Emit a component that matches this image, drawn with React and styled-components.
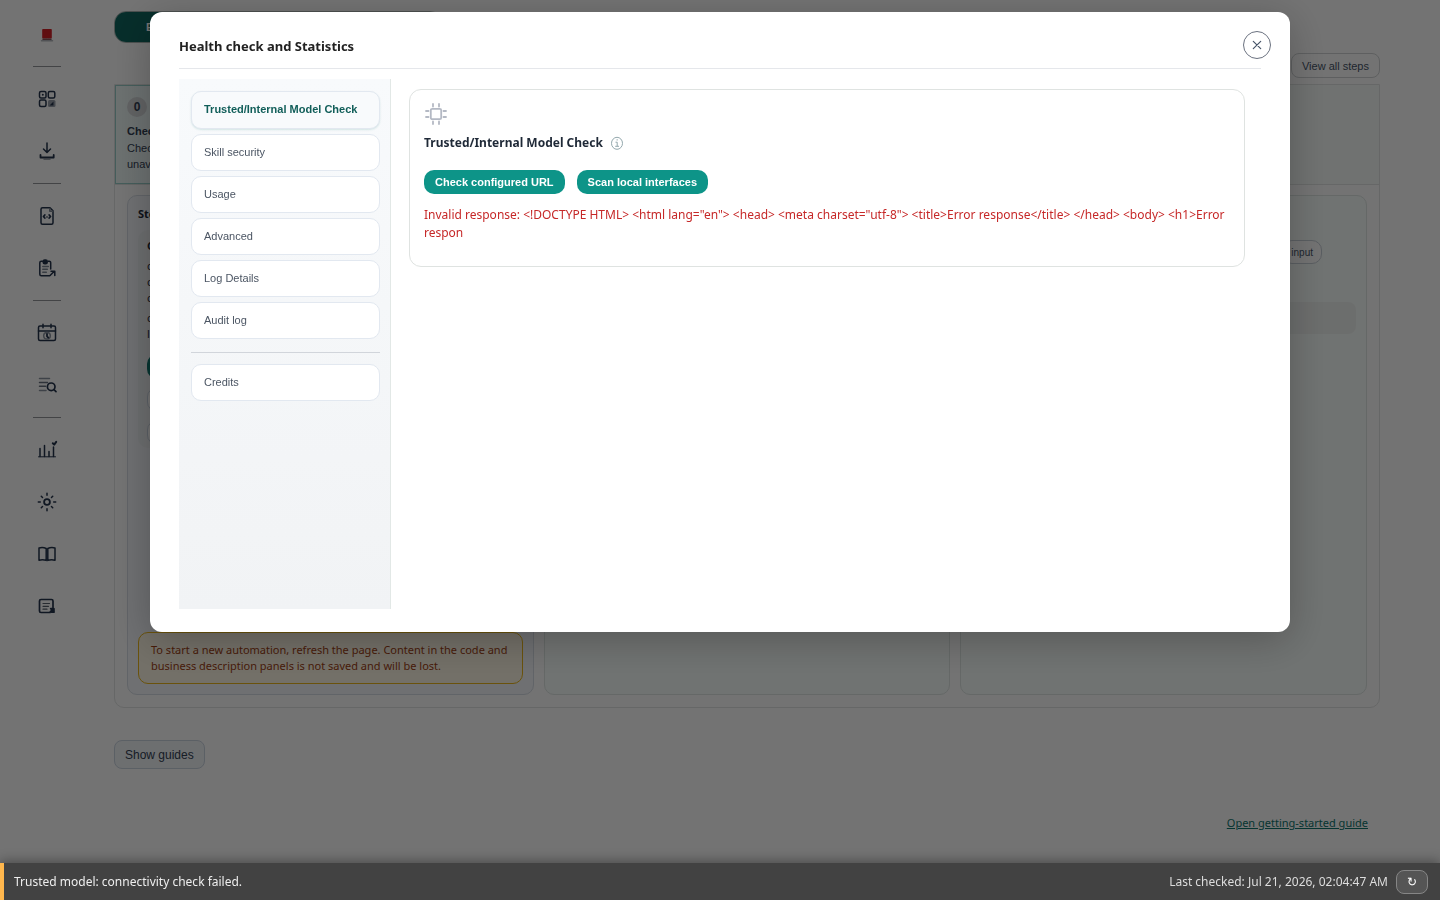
import React from 'react'
import styled, { createGlobalStyle, css } from 'styled-components'

const toolGroups = [
  ['home'],
  ['apps', 'download'],
  ['code', 'clipboard'],
  ['schedule', 'search'],
  ['stats', 'settings', 'guide', 'notes']
]

const sections = [
  'Trusted/Internal Model Check',
  'Skill security',
  'Usage',
  'Advanced',
  'Log Details',
  'Audit log'
]

const icons = {
  home: (
    <>
      <rect x='7.2' y='5' width='9.6' height='9.6' rx='.8' fill='#d61f26' stroke='none' />
      <path d='M8 15.3h8' stroke='#8a5a5f' strokeDasharray='1.5 1' />
      <path d='M6.5 16.8h11' stroke='#b3b7bd' />
    </>
  ),
  apps: (
    <>
      <rect x='4.5' y='4.5' width='6.5' height='6.5' rx='1.5' />
      <rect x='13.3' y='4.5' width='6.5' height='6.5' rx='1.5' />
      <rect x='4.5' y='13' width='6.5' height='6.5' rx='1.5' />
      <rect x='13' y='13' width='7.500' height='7' rx='1.5' fill='#9aa1ac' stroke='none' />
      <path d='M18.5 14.5v4h-4z' fill='currentColor' stroke='none' />
      <circle cx='7.8' cy='7.8' r='1' fill='currentColor' stroke='none' />
    </>
  ),
  download: (
    <>
      <path d='M12 4v9M8.5 10l3.500 3.500 3.500-3.500' />
      <path d='M5.500 16v2.500h13.200V16' strokeWidth='1.800' />
      <path d='M9 20h6' stroke='#7d8794' />
    </>
  ),
  code: (
    <>
      <path d='M7.500 3.800h7.500l3 3v12a1.500 1.500 0 0 1-1.500 1.500h-9a1.500 1.500 0 0 1-1.500-1.500V5.300a1.500 1.500 0 0 1 1.500-1.500z' />
      <path d='M14.800 4.500v2.800h3' stroke='#7d8794' />
      <path d='M9.800 11L8.500 12.500l1.300 1.500M14.200 11l1.300 1.500-1.300 1.500' strokeWidth='1.800' />
      <path d='M11.500 12.900h1' stroke='#69727f' />
    </>
  ),
  clipboard: (
    <>
      <path d='M7.500 5.200H6.300A1.500 1.500 0 0 0 4.800 6.700v11.600a1.500 1.500 0 0 0 1.500 1.500h8.500M13 5.200h1.200a1.500 1.500 0 0 1 1.500 1.500V13' />
      <rect x='8.200' y='4' width='4' height='3.800' rx='1.500' fill='currentColor' />
      <path d='M7.800 10.500h5.500M7.800 13.300h4.500M7.800 16.200h3.500' stroke='#7d8794' />
      <path d='M15.300 19.300l4-4M16 15.200h3.800v4.300' />
    </>
  ),
  schedule: (
    <>
      <rect x='3.500' y='5' width='17' height='14.500' rx='1.500' />
      <path d='M3.500 10h17M8 3.200v3.600M16 3.200v3.600' />
      <circle cx='12' cy='14.800' r='3.300' stroke='#8a93a0' />
      <path d='M12 13v2.300l1.300 1.300' strokeWidth='1.800' />
    </>
  ),
  search: (
    <>
      <path d='M4.500 5.500h10M4.500 17.500h6.500' stroke='#8a93a0' />
      <path d='M4.500 9.500h8M4.500 13.300h6' stroke='#69727f' />
      <circle cx='16.200' cy='13.800' r='3.800' strokeWidth='1.700' />
      <path d='M19 16.700l2 2' strokeWidth='1.700' />
    </>
  ),
  stats: (
    <>
      <path d='M3.500 18.800h17' strokeWidth='1' />
      <path d='M5 18.500v-8M9.500 18.500V7.500M14 18.500v-5M18.500 18.500V9' />
      <path d='M17.800 5.200l1.400 1.400 2-2.800' strokeWidth='2' />
    </>
  ),
  settings: (
    <>
      <circle cx='12' cy='12' r='2.900' strokeWidth='1.800' />
      <path d='M12 3.300v2M12 18.700v2M3.300 12h2M18.700 12h2M6.300 6.300l1.200 1.200M16.500 16.500l1.200 1.200M6.300 17.700l1.200-1.200M16.500 7.500l1.200-1.200' />
    </>
  ),
  guide: (
    <path d='M11.200 6.500C9 5.500 6.500 5.400 4 6v12.200c2.500-.7 5-.6 7.200.2zM12.800 6.500C15 5.500 17.500 5.400 20 6v12.200c-2.500-.7-5-.6-7.200.2z' />
  ),
  notes: (
    <>
      <path d='M15 18.500H6A1.500 1.500 0 0 1 4.500 17V7A1.500 1.500 0 0 1 6 5.500h10.500A1.500 1.500 0 0 1 18 7v6.500' strokeWidth='1.700' />
      <path d='M8 9.500h6.500M8 12.300h5.500M8 15.200h4' stroke='#59626e' strokeWidth='1.200' />
      <path d='M15.800 14.800h3v3M18.500 15l-3 2.800M16.500 18h2.500' strokeWidth='2' />
    </>
  )
}

function Icon ({ name }) {
  return (
    <svg
      width='24'
      height='24'
      viewBox='0 0 24 24'
      fill='none'
      stroke='currentColor'
      strokeWidth='1.500'
      strokeLinecap='round'
      strokeLinejoin='round'
      aria-hidden='true'
    >
      {icons[name]}
    </svg>
  )
}

function Toolbar () {
  return (
    <Side>
      {toolGroups.map((group, index) => (
        <React.Fragment key={group[0]}>
          {index > 0 && <SideRule />}
          {group.map(name => (
            <SideButton key={name} type='button' aria-label={name} $tall={name === 'home'}>
              <Icon name={name} />
            </SideButton>
          ))}
        </React.Fragment>
      ))}
    </Side>
  )
}

function Workspace () {
  return (
    <Main>
      <Modes>
        <Mode type='button'>E</Mode>
      </Modes>
      <StepsBar>
        <SmallButton type='button'>View all steps</SmallButton>
      </StepsBar>
      <Board>
        <Steps>
          <Step>
            <StepNumber>0</StepNumber>
            <strong>Check</strong>
            <span>Check</span>
            <span>unav</span>
          </Step>
        </Steps>
        <Columns>
          <Column $tone='slate'>
            <ColumnTitle>Ste</ColumnTitle>
            <Inner>
              <strong>C</strong>
              <InnerText>
                <span>c</span>
                <span>c</span>
                <span>c</span>
              </InnerText>
              <InnerText>
                <span>c</span>
                <span>l</span>
              </InnerText>
              <Pills>
                <PrimaryPill type='button' aria-label='Run check' />
                <OutlinePill type='button' aria-label='Details' />
                <OutlinePill type='button' aria-label='Reset' />
              </Pills>
            </Inner>
            <Notice>
              To start a new automation, refresh the page. Content in the code
              and business description panels is not saved and will be lost.
            </Notice>
          </Column>
          <Column />
          <Column>
            <InputRow>
              <Tag type='button'>input</Tag>
            </InputRow>
            <Placeholder />
          </Column>
        </Columns>
      </Board>
      <GuidesButton type='button'>Show guides</GuidesButton>
      <GuideLink href='#guide'>Open getting-started guide</GuideLink>
    </Main>
  )
}

function HealthDialog () {
  return (
    <Backdrop>
      <Dialog role='dialog' aria-modal='true' aria-labelledby='health-title'>
        <DialogHeader>
          <h2 id='health-title'>Health check and Statistics</h2>
        </DialogHeader>
        <Close type='button' aria-label='Close'>
          <svg width='12' height='12' viewBox='0 0 12 12' fill='none' stroke='currentColor' strokeWidth='1.200' strokeLinecap='round'>
            <path d='M2.300 2.300l7.400 7.400M9.700 2.300l-7.400 7.400' />
          </svg>
        </Close>
        <DialogBody>
          <Nav>
            {sections.map((label, index) => (
              <NavItem key={label} type='button' $active={index === 0}>
                {label}
              </NavItem>
            ))}
            <NavRule />
            <NavItem type='button'>Credits</NavItem>
          </Nav>
          <Content>
            <Panel>
              <svg width='24' height='24' viewBox='0 0 24 24' fill='none' stroke='#b4b9c4' strokeWidth='1.800' strokeLinecap='round' aria-hidden='true'>
                <rect x='6.800' y='6.800' width='10.400' height='10.400' rx='1.500' />
                <path d='M9 2v2.500M15 2v2.500M9 19.500V22M15 19.500V22M2 9h2.500M2 15h2.500M19.500 9H22M19.500 15H22' />
              </svg>
              <PanelTitle>
                Trusted/Internal Model Check
                <svg width='12' height='14' viewBox='0 0 12 14' fill='none' stroke='#94a8ad' aria-hidden='true'>
                  <ellipse cx='6' cy='7.300' rx='5.500' ry='6' />
                  <path d='M4.500 6.200h1.700v4M4.200 10.300h3.800' />
                  <path d='M5.600 3.800h1.100' strokeWidth='1.200' />
                </svg>
              </PanelTitle>
              <Actions>
                <Action type='button'>Check configured URL</Action>
                <Action type='button'>Scan local interfaces</Action>
              </Actions>
              <ErrorText>
                {'Invalid response: <!DOCTYPE HTML> <html lang="en"> <head> <meta charset="utf-8"> <title>Error response</title> </head> <body> <h1>Error respon'}
              </ErrorText>
            </Panel>
          </Content>
        </DialogBody>
      </Dialog>
    </Backdrop>
  )
}

export default function App () {
  return (
    <>
      <GlobalStyle />
      <Layout>
        <Toolbar />
        <Workspace />
      </Layout>
      <HealthDialog />
      <StatusBar role='status'>
        <span>Trusted model: connectivity check failed.</span>
        <Checked>Last checked: Jul 21, 2026, 02:04:47 AM</Checked>
        <Refresh type='button' aria-label='Check again'>↻</Refresh>
      </StatusBar>
    </>
  )
}

const GlobalStyle = createGlobalStyle`
  * {
    box-sizing: border-box;
  }

  body {
    margin: 0;
    background: #fff;
    color: #1f2937;
    font-family: 'Noto Sans', sans-serif;
    font-size: 12px;
  }

  button {
    margin: 0;
    font-family: 'Liberation Sans', Arial, sans-serif;
  }

  h2, h3, p {
    margin: 0;
  }
`

const Layout = styled.div`
  display: flex;
  min-height: 100vh;
`

const Side = styled.nav`
  flex: none;
  display: flex;
  flex-direction: column;
  align-items: center;
  gap: 12px;
  width: 94px;
  padding-top: 14px;
`

const SideButton = styled.button`
  display: flex;
  align-items: ${({ $tall }) => $tall ? 'flex-end' : 'center'};
  justify-content: center;
  width: 40px;
  height: 40px;
  padding: ${({ $tall }) => $tall ? '0 0 6px' : '0'};
  border: none;
  background: none;
  color: #24344d;
`

const SideRule = styled.div`
  width: 28px;
  height: 1px;
  background: #94979c;
`

const Main = styled.main`
  flex: 1;
  display: flex;
  flex-direction: column;
  align-items: flex-start;
  padding: 11px 60px 32px 20px;
`

const Modes = styled.div`
  display: flex;
  width: 328px;
  height: 32px;
  border: 1px solid #a9b3b1;
  border-radius: 12px;
`

const Mode = styled.button`
  width: 50%;
  padding: 0 31px;
  border: none;
  border-radius: 11px;
  background: #0f665f;
  color: #fff;
  font-size: 11px;
  font-weight: 700;
  text-align: left;
`

const StepsBar = styled.div`
  align-self: stretch;
  display: flex;
  justify-content: flex-end;
  padding: 10px 0 6px;
`

const SmallButton = styled.button`
  height: 25px;
  padding: 0 10px;
  border: 1px solid #d0d3d5;
  border-radius: 8px;
  background: #fff;
  color: #475569;
  font-size: 11px;
`

const Board = styled.section`
  align-self: stretch;
  border: 1px solid #e2e5e4;
  border-radius: 0 0 10px 10px;
`

const Steps = styled.div`
  background: #f8fcfa;
  border-bottom: 1px solid #e2e5e4;
`

const Step = styled.div`
  display: flex;
  flex-direction: column;
  align-items: flex-start;
  width: 180px;
  height: 99px;
  padding: 11px;
  border: 1px solid #99cfca;
  background: linear-gradient(90deg, #effaf9, #f1f5f9);
  color: #334155;
  font-family: 'Liberation Sans', Arial, sans-serif;
  font-size: 11px;
  line-height: 16px;

  strong {
    margin-bottom: 1px;
  }
`

const StepNumber = styled.div`
  width: 20px;
  height: 20px;
  margin-bottom: 6px;
  border-radius: 50%;
  background: #d8dbdd;
  font-size: 12px;
  font-weight: 700;
  line-height: 20px;
  text-align: center;
`

const Columns = styled.div`
  display: grid;
  grid-template-columns: repeat(3, 1fr);
  gap: 10px;
  padding: 10px 12px 12px;
`

const Column = styled.section`
  display: flex;
  flex-direction: column;
  min-height: 500px;
  padding: 10px;
  border: 1px solid #dfe7e4;
  border-radius: 10px;
  background: #f9fefc;

  ${({ $tone }) => $tone === 'slate' && css`
    border-color: #d8dee6;
    background: #f5f8fc;
  `}
`

const ColumnTitle = styled.h3`
  margin-bottom: 8px;
  font-size: 11px;
  line-height: 16px;
`

const Inner = styled.div`
  display: flex;
  flex-direction: column;
  gap: 4px;
  height: 218px;
  padding: 8px 9px;
  border-radius: 10px;
  background: #eff2f5;
  font-size: 11px;
  line-height: 16px;
`

const InnerText = styled.div`
  display: flex;
  flex-direction: column;
`

const Pills = styled.div`
  display: flex;
  flex-direction: column;
  gap: 8px;
  margin-top: 8px;
`

const PrimaryPill = styled.button`
  width: 140px;
  height: 25px;
  border: none;
  border-radius: 10px;
  background: #0f766e;
`

const OutlinePill = styled(PrimaryPill)`
  border: 1px solid #cbd5e1;
  background: #fff;
`

const Notice = styled.p`
  margin-top: auto;
  padding: 9px 12px;
  border: 1px solid #ebb71c;
  border-radius: 10px;
  background: #fff8e6;
  color: #a03f14;
  font-size: 11px;
  line-height: 16px;
`

const InputRow = styled.div`
  display: flex;
  justify-content: flex-end;
  padding: 34px 34px 38px 0;
`

const Tag = styled.button`
  height: 24px;
  padding: 0 8px;
  border: 1px solid #c8d0d8;
  border-radius: 10px;
  background: #fff;
  color: #475569;
  font-size: 10px;
`

const Placeholder = styled.div`
  height: 32px;
  border-radius: 8px;
  background: #f0f4f2;
`

const GuidesButton = styled.button`
  height: 29px;
  margin-top: 32px;
  padding: 0 10px;
  border: 1px solid #cbd5e1;
  border-radius: 8px;
  background: #f1f5f9;
  color: #334155;
  font-size: 12px;
`

const GuideLink = styled.a`
  align-self: flex-end;
  margin: 46px 12px 0 0;
  color: #0f766e;
  font-size: 11px;
  line-height: 16px;
`

const Backdrop = styled.div`
  position: fixed;
  inset: 0;
  display: flex;
  align-items: flex-start;
  justify-content: center;
  padding: 12px;
  background: rgba(0, 0, 0, .55);
`

const Dialog = styled.div`
  position: relative;
  width: 100%;
  max-width: 1140px;
  padding: 24px 29px 23px;
  border-radius: 12px;
  background: #fff;
  box-shadow: 0 8px 40px rgba(0, 0, 0, .25);
`

const DialogHeader = styled.header`
  padding-bottom: 12px;
  border-bottom: 1px solid #e5e7eb;

  h2 {
    color: #222;
    font-size: 13px;
    line-height: 20px;
  }
`

const Close = styled.button`
  position: absolute;
  top: 19px;
  right: 19px;
  display: flex;
  align-items: center;
  justify-content: center;
  width: 28px;
  height: 28px;
  padding: 0;
  border: 1px solid #6b7280;
  border-radius: 50%;
  background: #fff;
  color: #475569;
`

const DialogBody = styled.div`
  display: flex;
  min-height: 530px;
  margin-top: 10px;
`

const Nav = styled.nav`
  flex: none;
  display: flex;
  flex-direction: column;
  gap: 5px;
  width: 212px;
  padding: 12px 10px 12px 12px;
  border-right: 1px solid #e2e8e6;
  background: linear-gradient(#f8fafc, #f1f3f5);
`

const NavItem = styled.button`
  height: 37px;
  padding: 0 12px 2px;
  border: 1px solid #e2e8f0;
  border-radius: 10px;
  background: #fff;
  color: #4b5563;
  font-size: 11px;
  text-align: left;

  ${({ $active }) => $active && css`
    height: 38px;
    background: #f8fafc;
    color: #115e59;
    font-weight: 700;
    box-shadow: 0 1px 2px rgba(15, 118, 110, .15);
  `}
`

const NavRule = styled.div`
  height: 1px;
  margin: 8px 0 6px;
  background: #d1d5db;
`

const Content = styled.div`
  flex: 1;
  padding: 10px 16px 0 18px;
`

const Panel = styled.section`
  padding: 12px 14px 24px;
  border: 1px solid #dfe3e1;
  border-radius: 12px;

  > svg {
    display: block;
  }
`

const PanelTitle = styled.h3`
  display: flex;
  align-items: center;
  gap: 8px;
  margin: 8px 0 18px;
  font-size: 12px;
  line-height: 18px;
`

const Actions = styled.div`
  display: flex;
  gap: 12px;
  margin-bottom: 12px;
`

const Action = styled.button`
  height: 24px;
  padding: 0 11px;
  border: none;
  border-radius: 10px;
  background: #0d9488;
  color: #fff;
  font-size: 11px;
  font-weight: 700;
`

const ErrorText = styled.p`
  color: #c62828;
  line-height: 18px;
`

const StatusBar = styled.footer`
  position: fixed;
  right: 0;
  bottom: 0;
  left: 0;
  display: flex;
  align-items: center;
  gap: 8px;
  height: 37px;
  padding: 0 12px 0 10px;
  border-left: 4px solid #ffb74d;
  background: #424242;
  box-shadow: 0 -2px 12px rgba(0, 0, 0, .35);
  color: #eee;
`

const Checked = styled.span`
  margin-left: auto;
  color: #ddd;
`

const Refresh = styled.button`
  width: 32px;
  height: 24px;
  padding: 0;
  border: 1px solid #868686;
  border-radius: 8px;
  background: #555;
  color: #fff;
  font-size: 12px;
`
